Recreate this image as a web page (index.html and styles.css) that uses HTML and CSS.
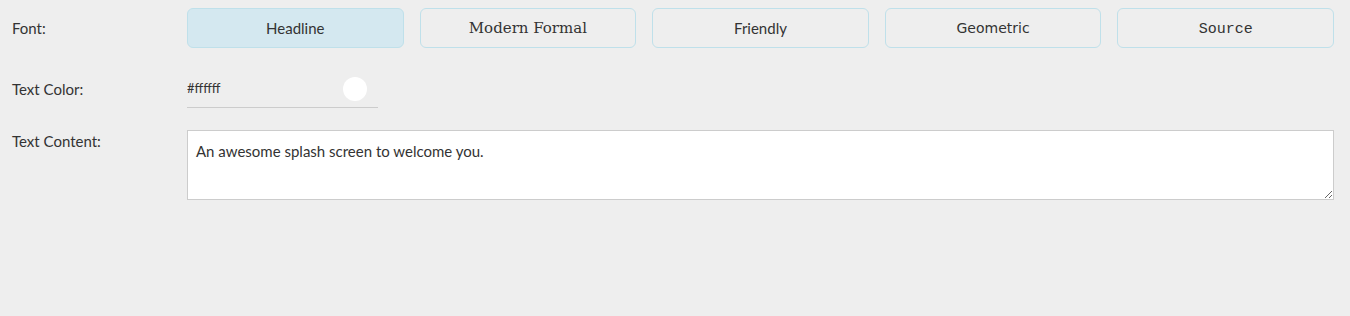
FILE: index.html
```html
<!DOCTYPE html>
<html lang="en">

<head>
  <meta charset="UTF-8">
  <meta name="viewport" content="width=device-width, initial-scale=1.0">
  <title>Splash settings</title>
  <link rel="stylesheet" href="styles.css">
</head>

<body>
  <div class="settings">
    <div class="row row-font">
      <div class="label">Font:</div>
      <div class="fonts">
        <button class="font-btn active f-headline">Headline</button>
        <button class="font-btn f-formal">Modern Formal</button>
        <button class="font-btn f-friendly">Friendly</button>
        <button class="font-btn f-geometric">Geometric</button>
        <button class="font-btn f-source">Source</button>
      </div>
    </div>
    <div class="row row-color">
      <div class="label">Text Color:</div>
      <div class="color-field">
        <input type="text" class="color-text" value="#ffffff">
        <span class="swatch"></span>
      </div>
    </div>
    <div class="row row-content">
      <div class="label">Text Content:</div>
      <textarea class="content">An awesome splash screen to welcome you.</textarea>
    </div>
  </div>
</body>

</html>
```

FILE: styles.css
```css
body,html{
  height:100%;
}
body {
  margin: 0;
  padding: 0;
  background-color: #eeeeee;
  font-family: 'Lato', sans-serif;
  color: #333;
}

.settings {
  padding: 8px 16px 0 12px;
}

.row {
  display: flex;
}

.label {
  width: 175px;
  flex-shrink: 0;
  font-size: 15px;
}

.row-font {
  align-items: center;
}

.fonts {
  flex: 1;
  display: flex;
  gap: 16px;
}

.font-btn {
  flex: 1;
  height: 40px;
  border: 1px solid #bfe0ea;
  border-radius: 6px;
  background-color: transparent;
  color: #333;
  font-size: 15px;
  padding: 0;
  cursor: pointer;
}

.font-btn.active {
  background-color: #d4e8f0;
}

.font-btn:focus {
  outline: none;
}

.f-headline, .f-friendly {
  font-family: 'Lato', sans-serif;
}

.f-formal {
  font-family: 'DejaVu Serif', serif;
}

.f-geometric {
  font-family: 'DejaVu Sans', sans-serif;
  font-size: 14px;
}

.f-source {
  font-family: 'Liberation Mono', monospace;
  padding-top: 2px;
}

.row-color {
  margin-top: 29px;
}

.row-color .label {
  line-height: 24px;
}

.color-field {
  width: 191px;
  display: flex;
  align-items: center;
  height: 24px;
  padding-bottom: 6px;
  border-bottom: 1px solid #cccccc;
}

.color-text {
  flex: 1;
  min-width: 0;
  border: none;
  background: transparent;
  font-family: 'Lato', sans-serif;
  font-size: 13px;
  color: #333;
  padding: 0;
  margin-top: -2px;
}

.color-text:focus {
  outline: none;
}

.swatch {
  width: 24px;
  height: 24px;
  border-radius: 50%;
  background-color: #fff;
  margin-right: 11px;
}

.row-content {
  margin-top: 22px;
}

.row-content .label {
  line-height: 20px;
  padding-top: 1px;
}

.content {
  flex: 1;
  height: 70px;
  box-sizing: border-box;
  border: 1px solid #cccccc;
  background: #fff;
  padding: 10px 8px;
  font-family: 'Lato', sans-serif;
  font-size: 15px;
  line-height: 20px;
  color: #333;
  margin: 0;
  resize: vertical;
}
```
